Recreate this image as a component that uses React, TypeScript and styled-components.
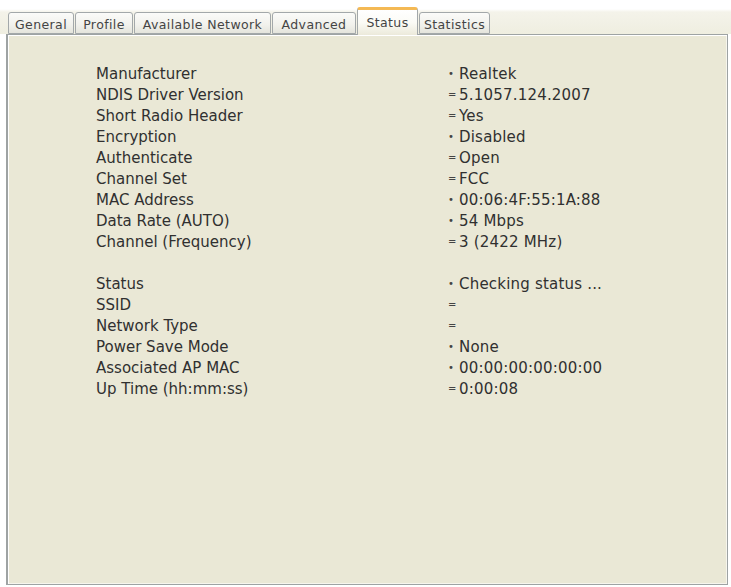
import styled, { createGlobalStyle } from "styled-components";

const GlobalStyle = createGlobalStyle`
  html, body {
    margin: 0;
    padding: 0;
    background: #ffffff;
  }
`;

interface TabInfo {
  label: string;
  width: number;
}

const TABS: TabInfo[] = [
  { label: "General", width: 66 },
  { label: "Profile", width: 58 },
  { label: "Available Network", width: 137 },
  { label: "Advanced", width: 84 },
  { label: "Status", width: 61 },
  { label: "Statistics", width: 71 },
];

const ACTIVE_TAB = "Status";

interface InfoRow {
  name: string;
  mark: "=" | "•";
  value: string;
}

const ADAPTER_ROWS: InfoRow[] = [
  { name: "Manufacturer", mark: "•", value: "Realtek" },
  { name: "NDIS Driver Version", mark: "=", value: "5.1057.124.2007" },
  { name: "Short Radio Header", mark: "=", value: "Yes" },
  { name: "Encryption", mark: "•", value: "Disabled" },
  { name: "Authenticate", mark: "=", value: "Open" },
  { name: "Channel Set", mark: "=", value: "FCC" },
  { name: "MAC Address", mark: "•", value: "00:06:4F:55:1A:88" },
  { name: "Data Rate (AUTO)", mark: "•", value: "54 Mbps" },
  { name: "Channel (Frequency)", mark: "=", value: "3 (2422 MHz)" },
];

const LINK_ROWS: InfoRow[] = [
  { name: "Status", mark: "•", value: "Checking status ..." },
  { name: "SSID", mark: "=", value: "" },
  { name: "Network Type", mark: "=", value: "" },
  { name: "Power Save Mode", mark: "•", value: "None" },
  { name: "Associated AP MAC", mark: "•", value: "00:00:00:00:00:00" },
  { name: "Up Time (hh:mm:ss)", mark: "=", value: "0:00:08" },
];

const App = () => {
  return (
    <Window>
      <GlobalStyle />
      <TabStrip>
        {TABS.map((tab) => (
          <Tab key={tab.label} $width={tab.width} $active={tab.label === ACTIVE_TAB}>
            {tab.label}
          </Tab>
        ))}
      </TabStrip>
      <Page>
        <InfoGroup>
          {ADAPTER_ROWS.map((row) => (
            <Row key={row.name} {...row} />
          ))}
        </InfoGroup>
        <InfoGroup>
          {LINK_ROWS.map((row) => (
            <Row key={row.name} {...row} />
          ))}
        </InfoGroup>
      </Page>
    </Window>
  );
};

const Row = ({ name, mark, value }: InfoRow) => (
  <RowLine>
    <RowName>{name}</RowName>
    <RowMark $dot={mark === "•"}>{mark}</RowMark>
    <RowValue>{value}</RowValue>
  </RowLine>
);

const Window = styled.div`
  width: 731px;
  height: 587px;
  display: flex;
  flex-direction: column;
  overflow: hidden;
  background: #ffffff;
  font-family: "DejaVu Sans", Verdana, sans-serif;
`;

const TabStrip = styled.div`
  height: 34px;
  display: flex;
  align-items: flex-end;
  padding-left: 8px;
  background: linear-gradient(
    to bottom,
    #ffffff 0px,
    #ffffff 9px,
    #f4f3ea 12px,
    #efeee0 34px
  );
  position: relative;
  z-index: 1;
`;

const Tab = styled.div<{ $width: number; $active: boolean }>`
  box-sizing: border-box;
  width: ${(p) => p.$width}px;
  height: ${(p) => (p.$active ? 28 : 22)}px;
  margin-right: 1px;
  margin-bottom: ${(p) => (p.$active ? -1 : 0)}px;
  display: flex;
  align-items: center;
  justify-content: center;
  padding-top: ${(p) => (p.$active ? 0 : 2)}px;
  font-size: 12.5px;
  letter-spacing: 0.4px;
  color: #444444;
  border: 1px solid #a3a8aa;
  border-bottom: ${(p) => (p.$active ? "none" : "1px solid #a3a8aa")};
  border-top: ${(p) => (p.$active ? "3px solid #f4b954" : "1px solid #a3a8aa")};
  border-radius: 3px 3px 0 0;
  background: ${(p) =>
    p.$active
      ? "linear-gradient(to bottom, #ffffff 0%, #fbfbf6 50%, #eceadb 100%)"
      : "linear-gradient(to bottom, #fbfbf9 0%, #f1f1ec 60%, #e4e4dc 100%)"};
`;

const Page = styled.div`
  flex: 1;
  margin: 0 3px 2px 6px;
  padding: 28px 0 0 88px;
  border: 1px solid #9ea3a3;
  border-left-width: 2px;
  box-shadow: inset 1px 1px 0 #ffffff, inset -1px -1px 0 #f6f5ee;
  background: #eae8d6;
  display: flex;
  flex-direction: column;
  gap: 21px;
`;

const InfoGroup = styled.div`
  display: flex;
  flex-direction: column;
`;

const RowLine = styled.div`
  display: flex;
  align-items: center;
  height: 21px;
  font-size: 15px;
  color: #303030;
`;

const RowName = styled.span`
  width: 352px;
  white-space: nowrap;
`;

const RowMark = styled.span<{ $dot: boolean }>`
  width: 11px;
  font-size: ${(p) => (p.$dot ? 10 : 10)}px;
  color: #444444;
`;

const RowValue = styled.span`
  white-space: nowrap;
  letter-spacing: 0.2px;
`;

export default App;
